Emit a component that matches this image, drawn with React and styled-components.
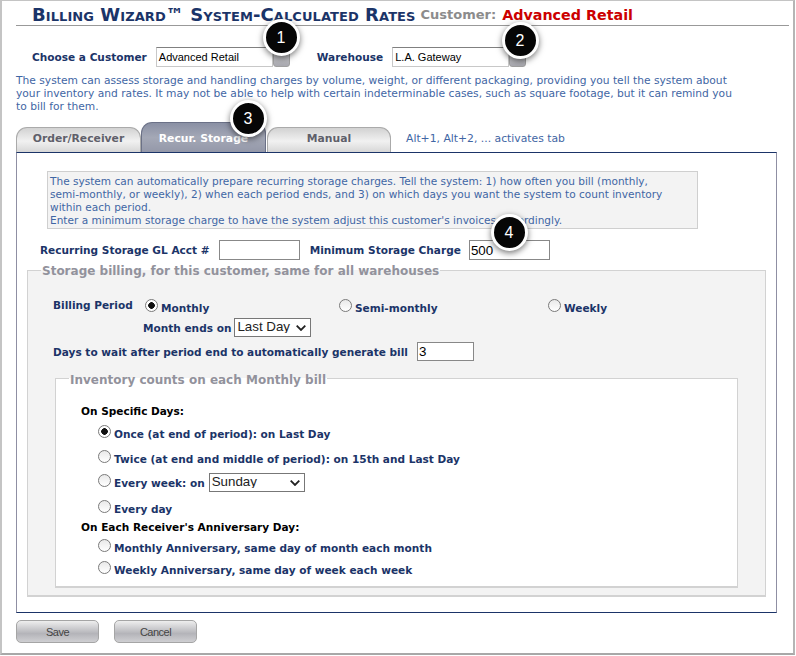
import React from 'react'
import styled, { createGlobalStyle } from 'styled-components'

const Global = createGlobalStyle`
  html, body { margin: 0; padding: 0; background: #fff; }
  body { font-family: "DejaVu Sans", Verdana, sans-serif; font-size: 10.7px; }
`

const navy = '#1b3468'
const blueText = '#3f66a4'
const boldSize = '10.55px'
const chevron = `url("data:image/svg+xml,%3Csvg xmlns='http://www.w3.org/2000/svg' width='10' height='6'%3E%3Cpath d='M.7.7 5 5 9.3.7' fill='none' stroke='%23222' stroke-width='1.8'/%3E%3C/svg%3E")`

const Frame = styled.div`
  position: relative;
  box-sizing: border-box;
  width: 795px;
  height: 655px;
  border: 1px solid #c4c4c4;
  border-width: 1px 2px 2px 2px;
  border-right-color: #b5b5b5;
  border-bottom-color: #a8a8a8;
  padding: 0 4px 0 14px;
  overflow: hidden;
`
const TitleBar = styled.div`
  height: 24px;
  padding-left: 16px;
  border-bottom: 1px solid #999;
  display: flex;
  align-items: flex-end;
  white-space: nowrap;
  font-weight: bold;
  line-height: 20px;
`
const Title = styled.span`
  color: ${navy};
  font-size: 18px;
  font-variant: small-caps;
  letter-spacing: 0.07px;
`
const CustomerLabel = styled.span`
  color: #8c8c8c;
  font-size: 13px;
  margin-left: 5px;
`
const CustomerName = styled.span`
  color: #cc0000;
  font-size: 14.3px;
  margin-left: 6px;
`
const ChooseRow = styled.div`
  display: flex;
  align-items: center;
  height: 21px;
  margin-top: 20px;
  padding-left: 16px;
`
const FieldLabel = styled.label`
  font-weight: bold;
  font-size: ${boldSize};
  color: ${navy};
  margin-right: ${p => p.$gap || 0}px;
  margin-left: ${p => p.$left || 0}px;
  white-space: nowrap;
`
const Combo = styled.div`
  display: flex;
  height: 20px;
  width: ${p => p.$width}px;
`
const ComboText = styled.div`
  flex: 1;
  box-sizing: border-box;
  border: 1px solid #c8c8c8;
  border-top-color: #808080;
  font-family: "Liberation Sans", Arial, sans-serif;
  font-size: 11px;
  line-height: 19px;
  padding-left: 2px;
  color: #000;
`
const ComboArrow = styled.div`
  width: 17px;
  box-sizing: border-box;
  border: 1px solid #a0a0a0;
  border-radius: 0 0 3px 3px;
  background: linear-gradient(#d8d8d8, #a9a9b0);
`
const Intro = styled.p`
  margin: 7px 0 0 0;
  color: ${blueText};
  line-height: 13px;
  width: 745px;
`
const TabRow = styled.div`
  display: flex;
  align-items: flex-end;
  height: 30px;
  margin-top: 9px;
`
const Tab = styled.div`
  box-sizing: border-box;
  width: ${p => p.$width}px;
  height: ${p => (p.$active ? 30 : 25)}px;
  margin-right: ${p => p.$gap}px;
  border: 1px solid ${p => (p.$active ? '#6b7187' : '#aaa')};
  border-bottom: none;
  border-radius: 11px 11px 0 0;
  background: ${p => (p.$active
    ? 'linear-gradient(#8a90a4, #a4a8b6 50%, #9498a9)'
    : 'linear-gradient(#d2d2d2, #f1f1f1 55%, #d7d7d7)')};
  color: ${p => (p.$active ? '#fff' : '#5f5f6a')};
  font-weight: bold;
  font-size: 10.8px;
  text-align: center;
  line-height: ${p => (p.$active ? 31 : 21)}px;
`
const TabHint = styled.span`
  color: ${blueText};
  font-size: 10.8px;
  margin-left: 15px;
  align-self: center;
  padding-top: 2px;
`
const Panel = styled.div`
  box-sizing: border-box;
  width: 761px;
  height: 461px;
  border: 1px solid #8f8fa3;
  border-top: 1px solid ${navy};
  border-bottom: 1px solid ${navy};
  padding: 18px 10px 0 10px;
`
const Note = styled.div`
  box-sizing: border-box;
  width: 651px;
  height: 58px;
  margin-left: 20px;
  padding: 3px 2px 0 2px;
  background: #f3f3f3;
  border: 1px solid #cfcfcf;
  color: ${blueText};
  font-size: 10.55px;
  line-height: 13px;
`
const GlRow = styled.div`
  display: flex;
  align-items: center;
  height: 20px;
  margin-top: 11px;
  padding-left: 13px;
`
const TextBox = styled.input`
  box-sizing: border-box;
  width: ${p => p.$width}px;
  height: ${p => p.$height || 20}px;
  border: 1px solid #888;
  padding: 0 0 0 1px;
  margin: 0 0 0 ${p => p.$left || 0}px;
  background: #fff;
  color: #000;
  font-family: "Liberation Sans", Arial, sans-serif;
  font-size: 13.33px;
  outline: none;
`
const Group = styled.fieldset`
  box-sizing: border-box;
  margin: ${p => p.$margin};
  padding: 0;
  height: ${p => p.$height}px;
  background: ${p => p.$bg};
  border: 2px solid #d2d2d2;
  border-width: 1px 1px 2px 1px;
  min-width: 0;
`
const GroupTitle = styled.legend`
  margin-left: ${p => p.$left}px;
  padding: ${p => p.$top}px 1px 0 1px;
  color: #92929c;
  font-weight: bold;
  font-size: 12px;
  line-height: 15px;
`
const PeriodGrid = styled.div`
  display: grid;
  grid-template-columns: 92px 194px 209px 1fr;
  margin: 20px 0 0 25px;
  align-items: start;
  height: 19px;
`
const Bold = styled.span`
  font-weight: bold;
  font-size: ${boldSize};
  color: ${navy};
  white-space: nowrap;
`
const RadioLabel = styled.label`
  display: flex;
  align-items: flex-start;
  font-weight: bold;
  font-size: ${boldSize};
  color: ${navy};
  white-space: nowrap;
  margin: ${p => p.$margin || 0};
  height: ${p => p.$height || 'auto'};
`
const Radio = styled.input.attrs({ type: 'radio' })`
  appearance: none;
  width: 13px;
  height: 13px;
  flex: none;
  box-sizing: border-box;
  margin: 0 3px 0 0;
  border: 1px solid #7a7a7a;
  border-radius: 50%;
  background: linear-gradient(#e9e9e9, #fff);
  &:checked {
    background: radial-gradient(circle, #111 0 3px, #fff 3.6px);
  }
`
const RadioText = styled.span`
  line-height: 13px;
  padding-top: 3px;
`
const EndsRow = styled.div`
  display: flex;
  align-items: center;
  height: 19px;
  margin: 0 0 0 115px;
`
const DropDown = styled.select`
  appearance: none;
  box-sizing: border-box;
  width: ${p => p.$width}px;
  height: 19px;
  margin: ${p => p.$margin || 0};
  border: 1px solid #777;
  border-radius: 0;
  background: #fff ${chevron} no-repeat right 4px center;
  color: #222;
  padding: 0 0 3px 2px;
  font-family: "Liberation Sans", Arial, sans-serif;
  font-size: 13.33px;
  outline: none;
`
const WaitRow = styled.div`
  display: flex;
  align-items: center;
  height: 19px;
  margin: 5px 0 0 25px;
`
const SubHead = styled.div`
  font-weight: bold;
  font-size: ${boldSize};
  color: #000;
  margin: ${p => p.$margin};
  line-height: 13px;
`
const Options = styled.div`
  padding-left: 42px;
`
const ButtonRow = styled.div`
  display: flex;
  gap: 15px;
  margin-top: 7px;
`
const Btn = styled.button`
  box-sizing: border-box;
  width: 83px;
  height: 23px;
  padding: 0;
  border: 1px solid #a5a5a5;
  border-radius: 5px;
  background: linear-gradient(#eeeeee, #b4b4b9 60%, #cfcfd2);
  color: #444;
  font-family: "Liberation Sans", Arial, sans-serif;
  font-size: 11px;
  letter-spacing: -0.5px;
`
const Callout = styled.div`
  position: absolute;
  left: ${p => p.$x - 20.5}px;
  top: ${p => p.$y - 19.5}px;
  box-sizing: border-box;
  width: 37px;
  height: 37px;
  border: 3px solid #fff;
  border-radius: 50%;
  background: #060606;
  box-shadow: 0 2px 6px rgba(0, 0, 0, 0.55);
  color: #fff;
  font-family: "Liberation Sans", Arial, sans-serif;
  font-size: 16px;
  line-height: 31px;
  text-align: center;
`

export default function App() {
  return (
    <>
      <Global />
      <Frame>
        <TitleBar>
          <Title>Billing Wizard™ System-Calculated Rates</Title>
          <CustomerLabel>Customer:</CustomerLabel>
          <CustomerName>Advanced Retail</CustomerName>
        </TitleBar>

        <ChooseRow>
          <FieldLabel $gap={9}>Choose a Customer</FieldLabel>
          <Combo $width={134}>
            <ComboText>Advanced Retail</ComboText>
            <ComboArrow />
          </Combo>
          <FieldLabel $left={27} $gap={9}>Warehouse</FieldLabel>
          <Combo $width={134}>
            <ComboText>L.A. Gateway</ComboText>
            <ComboArrow />
          </Combo>
        </ChooseRow>

        <Intro>
          The system can assess storage and handling charges by volume, weight, or different packaging, providing you tell the system about<br />
          your inventory and rates. It may not be able to help with certain indeterminable cases, such as square footage, but it can remind you<br />
          to bill for them.
        </Intro>

        <TabRow>
          <Tab $width={125} $gap={0}>Order/Receiver</Tab>
          <Tab $width={125} $gap={1} $active>Recur. Storage</Tab>
          <Tab $width={124} $gap={0}>Manual</Tab>
          <TabHint>Alt+1, Alt+2, ... activates tab</TabHint>
        </TabRow>

        <Panel>
          <Note>
            The system can automatically prepare recurring storage charges. Tell the system: 1) how often you bill (monthly,<br />
            semi-monthly, or weekly), 2) when each period ends, and 3) on which days you want the system to count inventory<br />
            within each period.<br />
            Enter a minimum storage charge to have the system adjust this customer's invoices accordingly.
          </Note>

          <GlRow>
            <FieldLabel $gap={9}>Recurring Storage GL Acct #</FieldLabel>
            <TextBox $width={81} />
            <FieldLabel $left={10} $gap={8}>Minimum Storage Charge</FieldLabel>
            <TextBox $width={81} defaultValue="500" />
          </GlRow>

          <Group $margin="2px 0 0 0" $height={335} $bg="#f3f3f3">
            <GroupTitle $left={13} $top={2}>Storage billing, for this customer, same for all warehouses</GroupTitle>

            <PeriodGrid>
              <Bold>Billing Period</Bold>
              <RadioLabel><Radio name="period" defaultChecked /><RadioText>Monthly</RadioText></RadioLabel>
              <RadioLabel><Radio name="period" /><RadioText>Semi-monthly</RadioText></RadioLabel>
              <RadioLabel><Radio name="period" /><RadioText>Weekly</RadioText></RadioLabel>
            </PeriodGrid>

            <EndsRow>
              <Bold>Month ends on</Bold>
              <DropDown $width={77} $margin="0 0 0 3px" defaultValue="Last Day">
                <option>Last Day</option>
              </DropDown>
            </EndsRow>

            <WaitRow>
              <Bold>Days to wait after period end to automatically generate bill</Bold>
              <TextBox $width={57} $height={19} $left={9} defaultValue="3" />
            </WaitRow>

            <Group $margin="8px 27px 0 27px" $height={219} $bg="#fff">
              <GroupTitle $left={13} $top={4}>Inventory counts on each Monthly bill</GroupTitle>

              <SubHead $margin="17px 0 0 25px">On Specific Days:</SubHead>
              <Options>
                <RadioLabel $margin="7px 0 0 0" $height="25px"><Radio name="count" defaultChecked /><RadioText>Once (at end of period): on Last Day</RadioText></RadioLabel>
                <RadioLabel $height="24px"><Radio name="count" /><RadioText>Twice (at end and middle of period): on 15th and Last Day</RadioText></RadioLabel>
                <RadioLabel $height="26px">
                  <Radio name="count" />
                  <RadioText>Every week: on</RadioText>
                  <DropDown $width={96} $margin="-1px 0 0 4px" defaultValue="Sunday">
                    <option>Sunday</option>
                  </DropDown>
                </RadioLabel>
                <RadioLabel $height="21px"><Radio name="count" /><RadioText>Every day</RadioText></RadioLabel>
              </Options>
              <SubHead $margin="0 0 0 25px">On Each Receiver's Anniversary Day:</SubHead>
              <Options>
                <RadioLabel $margin="5px 0 0 0" $height="22px"><Radio name="count" /><RadioText>Monthly Anniversary, same day of month each month</RadioText></RadioLabel>
                <RadioLabel><Radio name="count" /><RadioText>Weekly Anniversary, same day of week each week</RadioText></RadioLabel>
              </Options>
            </Group>
          </Group>
        </Panel>

        <ButtonRow>
          <Btn>Save</Btn>
          <Btn>Cancel</Btn>
        </ButtonRow>

        <Callout $x={281} $y={37}>1</Callout>
        <Callout $x={520} $y={40}>2</Callout>
        <Callout $x={248} $y={118}>3</Callout>
        <Callout $x={509} $y={232}>4</Callout>
      </Frame>
    </>
  )
}
